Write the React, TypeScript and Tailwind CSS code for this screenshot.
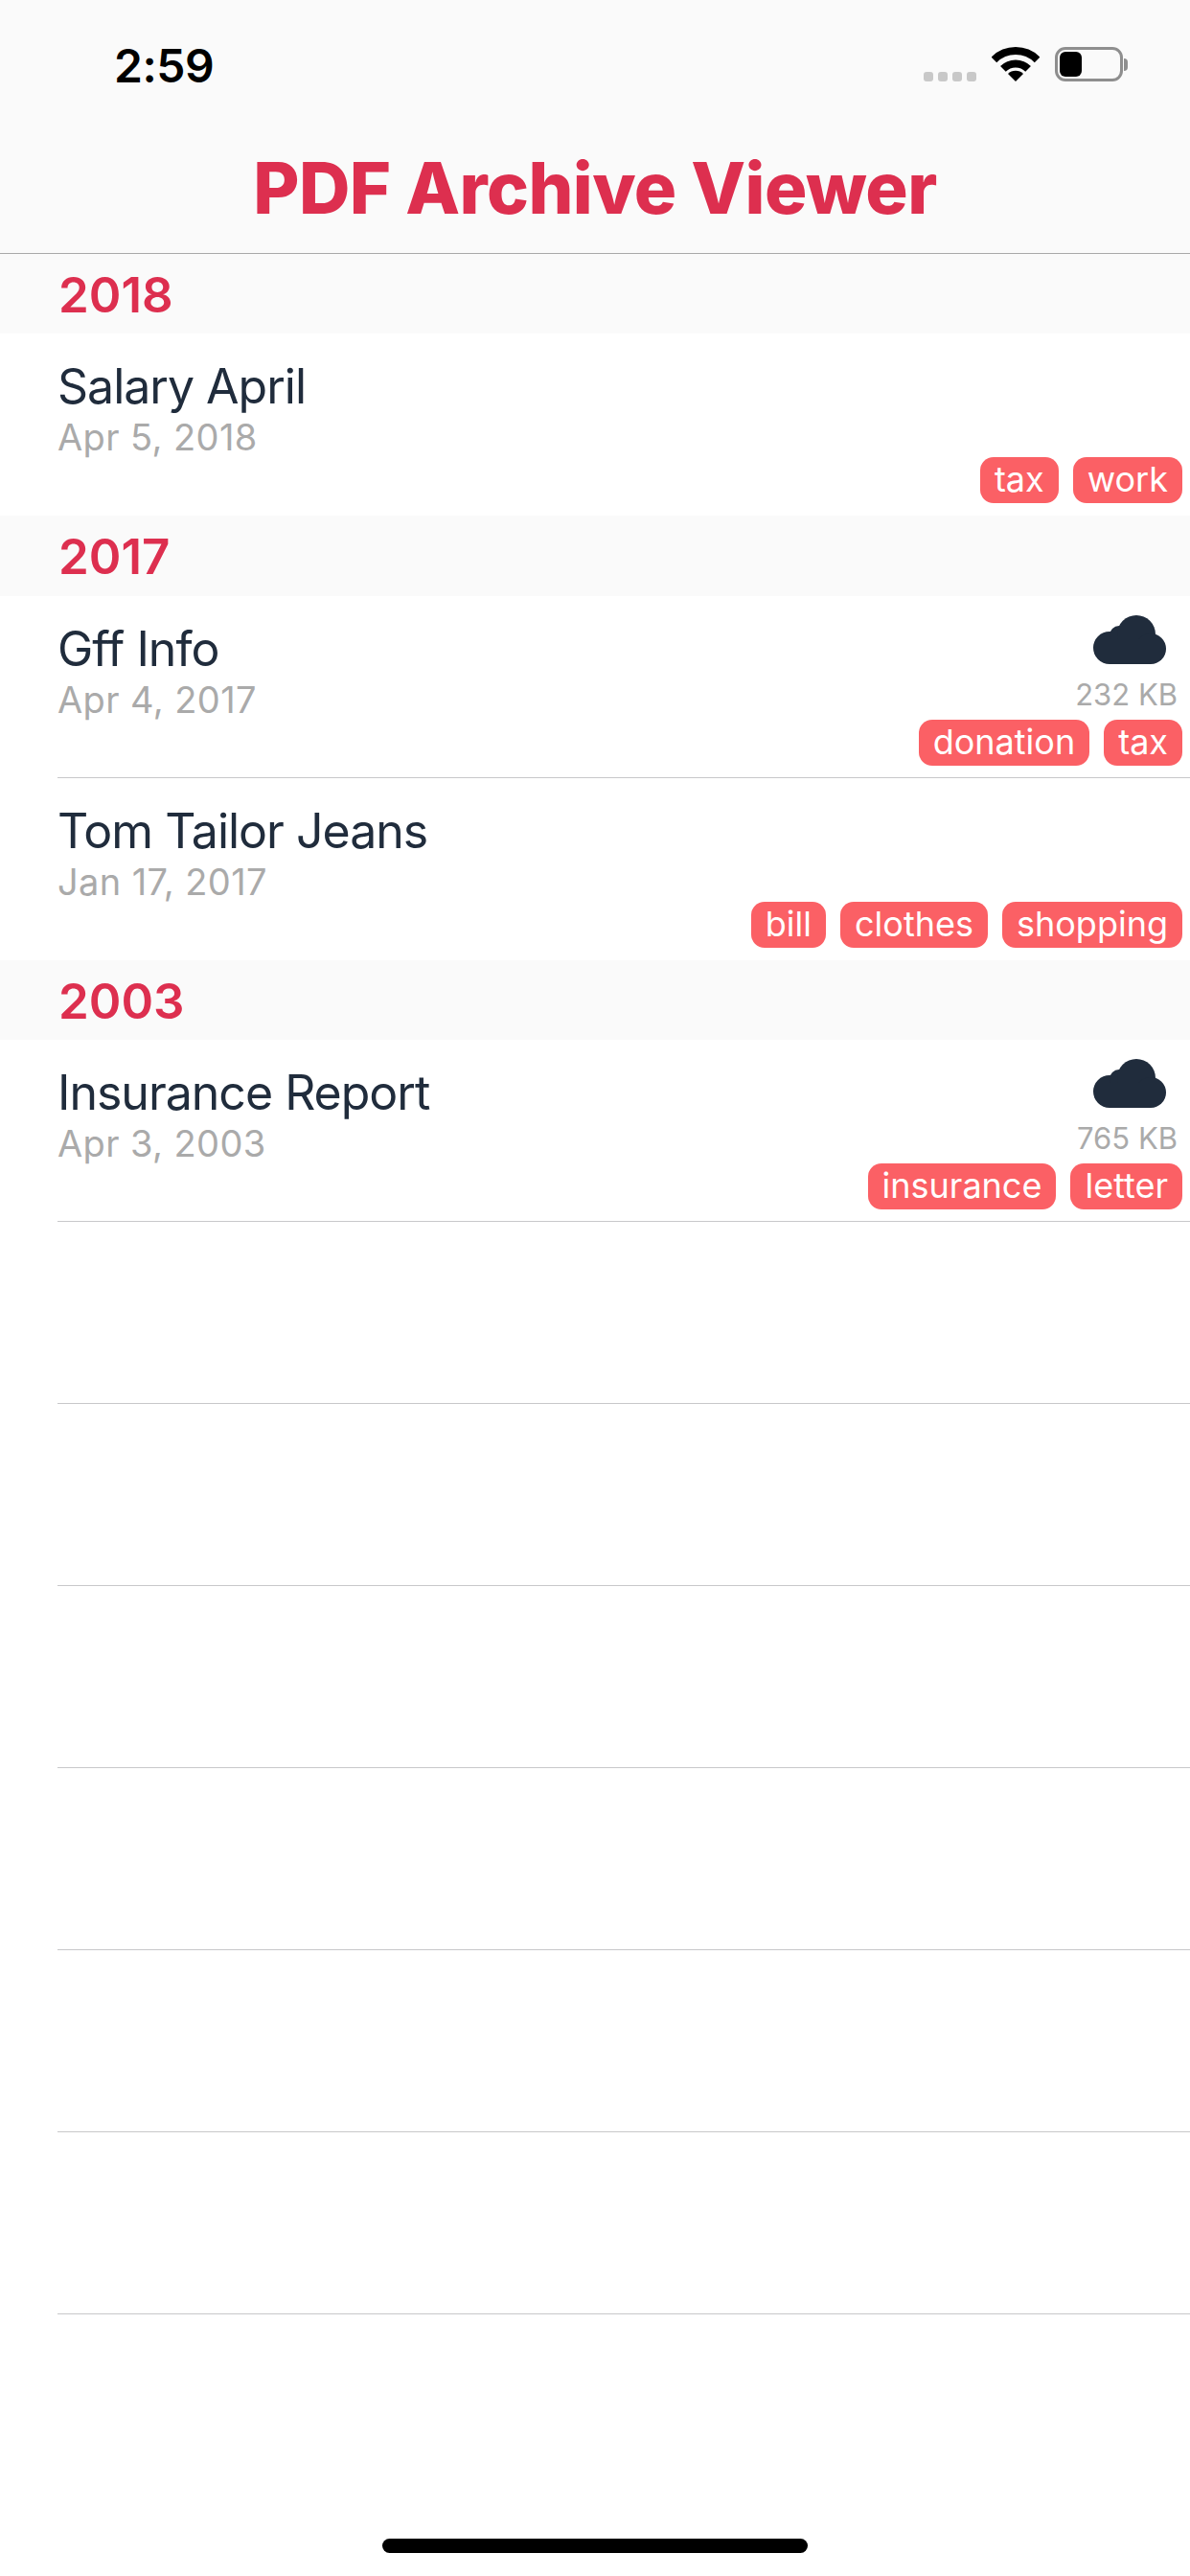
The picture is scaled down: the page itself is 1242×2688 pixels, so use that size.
import React from 'react';

interface Doc {
  title: string;
  date: string;
  tags: string[];
  size?: string;
}

interface Section {
  year: string;
  docs: Doc[];
}

const sections: Section[] = [
  { year: '2018', docs: [{ title: 'Salary April', date: 'Apr 5, 2018', tags: ['tax', 'work'] }] },
  {
    year: '2017',
    docs: [
      { title: 'Gff Info', date: 'Apr 4, 2017', tags: ['donation', 'tax'], size: '232 KB' },
      { title: 'Tom Tailor Jeans', date: 'Jan 17, 2017', tags: ['bill', 'clothes', 'shopping'] },
    ],
  },
  {
    year: '2003',
    docs: [{ title: 'Insurance Report', date: 'Apr 3, 2003', tags: ['insurance', 'letter'], size: '765 KB' }],
  },
];

const emptyRows = [1, 2, 3, 4, 5, 6];

const CloudIcon = () => (
  <svg width="76" height="51" viewBox="0 0 76 51" fill="#202c3c">
    <circle cx="17" cy="34" r="17" />
    <circle cx="27" cy="21" r="10" />
    <circle cx="45" cy="20" r="20" />
    <circle cx="60" cy="35" r="16" />
    <rect x="17" y="25" width="43" height="26" />
  </svg>
);

const WifiIcon = () => (
  <svg width="50" height="36" viewBox="0 0 50 36" fill="none" stroke="#000" strokeWidth="8">
    <path d="M2.4 13.4 A32 32 0 0 1 47.6 13.4" />
    <path d="M11.9 22.9 A18.5 18.5 0 0 1 38.1 22.9" />
    <path d="M25 36 L17 28 A11.3 11.3 0 0 1 33 28 Z" fill="#000" stroke="none" />
  </svg>
);

const StatusBar = () => (
  <div className="flex h-[98px] items-end justify-between pl-[119px] pr-[65px]">
    <span className="text-[48px] leading-[58px] font-semibold tracking-[-0.5px] text-black">2:59</span>
    <div className="flex items-end gap-[16px] pb-[13px]">
      <div className="flex gap-[5px]">
        {[0, 1, 2, 3].map(i => (
          <div key={i} className="h-[10px] w-[10px] rounded-[3px] bg-[#c8c8c8]" />
        ))}
      </div>
      <div className="flex items-end gap-[16px]">
        <WifiIcon />
        <div className="flex items-center gap-[1px]">
          <div className="h-[36px] w-[71px] rounded-[11px] border-[3px] border-[#8e8e8e] p-[2px]">
            <div className="h-full w-[23px] rounded-[6px] bg-black" />
          </div>
          <div className="h-[13px] w-[4px] rounded-r-[4px] bg-[#8e8e8e]" />
        </div>
      </div>
    </div>
  </div>
);

const DocRow: React.FC<{ doc: Doc; separator: boolean }> = ({ doc, separator }) => (
  <div className={`ml-[60px] flex h-[190px] justify-between border-b pr-[8px] ${separator ? 'border-[#c8c8ca]' : 'border-transparent'}`}>
    <div className="pt-[24px]">
      <div className="text-[50px] leading-[62px] tracking-[-1px] text-[#202c3c]">{doc.title}</div>
      <div className="-mt-[3px] text-[38px] leading-[50px] tracking-[0.4px] text-[#aaaaaa]">{doc.date}</div>
    </div>
    <div className="flex flex-col items-end justify-end pb-[12px]">
      {doc.size && (
        <>
          <div className="mr-[17px]"><CloudIcon /></div>
          <div className="mt-[14px] mb-[8px] mr-[5px] text-[31px] leading-[36px] text-[#aaaaaa]">{doc.size}</div>
        </>
      )}
      <div className="flex gap-[15px]">
        {doc.tags.map(tag => (
          <span key={tag} className="h-[48px] rounded-[14px] bg-[#fb6065] px-[15px] text-[36px] leading-[47px] text-white">
            {tag}
          </span>
        ))}
      </div>
    </div>
  </div>
);

const App: React.FC = () => {
  return (
    <div className="h-[2688px] w-[1242px] overflow-hidden bg-white font-['Inter',sans-serif]">
      <div className="h-[265px] border-b border-[#a9a9a9] bg-[#fafafa]">
        <StatusBar />
        <h1 className="mt-[55px] text-center text-[74px] leading-[86px] font-extrabold tracking-[-0.6px] text-[#dd2f4f]">PDF Archive Viewer</h1>
      </div>
      {sections.map((section, s) => (
        <div key={section.year}>
          <div className="h-[83.33px] bg-[#fafafa] pl-[61px] text-[51px] leading-[86px] font-semibold text-[#dd2f4f]">
            {section.year}
          </div>
          {section.docs.map((doc, d) => (
            <DocRow
              key={doc.title}
              doc={doc}
              separator={s === sections.length - 1 || d < section.docs.length - 1}
            />
          ))}
        </div>
      ))}
      {emptyRows.map(i => (
        <div key={i} className="ml-[60px] h-[190px] border-b border-[#c8c8ca]" />
      ))}
      <div className="mt-[234px] flex justify-center">
        <div className="h-[15px] w-[444px] rounded-full bg-black" />
      </div>
    </div>
  );
};

export default App;
